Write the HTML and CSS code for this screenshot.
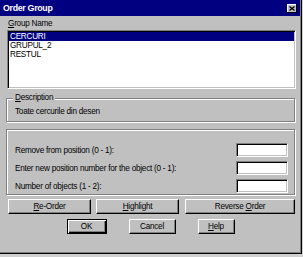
FILE: index.html
```html
<!DOCTYPE html>
<html lang="ro">
<head>
    <meta charset="UTF-8">
    <title>Order Group</title>
    <link rel="stylesheet" href="styles.css">
</head>
<body>
    <div class="dialog">
        <div class="titlebar">
            <span class="title">Order Group</span>
            <span class="close">
                <svg width="6" height="5" viewBox="0 0 6 5"><path d="M0.5 0.5 L5.5 4.5 M5.5 0.5 L0.5 4.5" stroke="#000" stroke-width="1.3"/></svg>
            </span>
        </div>
        <div class="content">
            <div class="label"><u>G</u>roup Name</div>
            <div class="listbox">
                <div class="item selected">CERCURI</div>
                <div class="item">GRUPUL_2</div>
                <div class="item">RESTUL</div>
            </div>

            <div class="group desc">
                <div class="group-title"><u>D</u>escription</div>
                <div class="desc-text">Toate cercurile din desen</div>
            </div>

            <div class="group fields">
                <div class="row">
                    <span>Remove from position (0 - 1):</span>
                    <div class="field"></div>
                </div>
                <div class="row">
                    <span>Enter new position number for the object (0 - 1):</span>
                    <div class="field"></div>
                </div>
                <div class="row">
                    <span>Number of objects (1 - 2):</span>
                    <div class="field"></div>
                </div>
            </div>

            <div class="buttons actions">
                <button type="button" class="btn reorder"><u>R</u>e-Order</button>
                <button type="button" class="btn highlight"><u>H</u>ighlight</button>
                <button type="button" class="btn reverse">Reverse <u>O</u>rder</button>
            </div>
            <div class="buttons footer">
                <button type="button" class="btn ok">OK</button>
                <button type="button" class="btn cancel">Cancel</button>
                <button type="button" class="btn help"><u>H</u>elp</button>
            </div>
        </div>
    </div>
</body>
</html>
```

FILE: styles.css
```css
body {
    margin: 0;
    background-color: #d0d0d0;
    font-family: "Liberation Sans", Arial, sans-serif;
    font-size: 8.2px;
    letter-spacing: -0.25px;
    color: #000;
}
div.dialog {
    width: 302px;
    height: 254px;
    box-sizing: border-box;
    background-color: #c0c0c0;
    border-right: 1px solid #000;
    border-bottom: 1px solid #000;
    box-shadow: inset -1px -1px 0 #808080;
}
div.titlebar {
    height: 16px;
    margin-right: 1px;
    padding: 0 3px;
    background-color: #000080;
    color: #fff;
    font-weight: bold;
    font-size: 8.8px;
    letter-spacing: -0.3px;
    display: flex;
    align-items: center;
    justify-content: space-between;
}
div.titlebar span.close {
    width: 10px;
    height: 9px;
    background-color: #c0c0c0;
    box-shadow: inset -1px -1px 0 #000, inset 1px 1px 0 #fff;
    display: flex;
    align-items: center;
    justify-content: center;
}
div.content {
    padding: 0 6px;
}
div.label {
    height: 12px;
    line-height: 12px;
    margin: 2px 0 0 2px;
}
div.listbox {
    height: 59px;
    box-sizing: border-box;
    margin: 0 -1px 0 1px;
    padding: 1px;
    background-color: #fff;
    border: 1px solid;
    border-color: #808080 #fff #fff #808080;
    box-shadow: inset 1px 1px 0 #000, inset -1px -1px 0 #c0c0c0;
}
div.listbox div.item {
    height: 9px;
    line-height: 9px;
    padding-left: 1px;
}
div.listbox div.item.selected {
    background-color: #000080;
    color: #fff;
}
div.group {
    border: 1px solid #808080;
    box-shadow: inset 1px 1px 0 #fff, 1px 1px 0 #fff;
}
div.group div.group-title {
    width: max-content;
    height: 12px;
    line-height: 12px;
    margin: -7px 0 0 6px;
    padding: 0 2px;
    background-color: #c0c0c0;
}
div.desc {
    margin-top: 9px;
    padding: 0 8px 3px;
}
div.desc div.group-title {
    margin-left: -2px;
}
div.desc div.desc-text {
    height: 12px;
    line-height: 12px;
    margin-top: 2px;
}
div.fields {
    margin-top: 7px;
    padding: 13px 6px 1px 8px;
    display: flex;
    flex-direction: column;
    gap: 4px;
}
div.fields div.row {
    height: 14px;
    display: flex;
    align-items: center;
    justify-content: space-between;
}
div.fields div.field {
    width: 52px;
    height: 14px;
    box-sizing: border-box;
    background-color: #fff;
    border: 1px solid;
    border-color: #808080 #fff #fff #808080;
    box-shadow: inset 1px 1px 0 #000, inset -1px -1px 0 #c0c0c0;
}
div.buttons {
    display: flex;
}
div.actions {
    margin: 4px 0 0 2px;
    gap: 5px;
}
div.footer {
    margin-top: 5px;
    justify-content: center;
    gap: 22px;
}
button.btn {
    height: 15px;
    padding: 0;
    font-family: "Liberation Sans", Arial, sans-serif;
    font-size: 8.2px;
    letter-spacing: -0.25px;
    color: #000;
    background-color: #c0c0c0;
    border: 1px solid;
    border-color: #fff #000 #000 #fff;
    box-shadow: inset -1px -1px 0 #808080;
}
button.reorder, button.highlight {
    width: 83px;
}
button.reverse {
    width: 110px;
    margin-left: 1px;
}
button.ok {
    width: 40px;
    border-color: #000;
    box-shadow: inset 1px 1px 0 #fff, inset -1px -1px 0 #000, inset -2px -2px 0 #808080;
}
button.cancel {
    width: 47px;
}
button.help {
    width: 37px;
}
```
